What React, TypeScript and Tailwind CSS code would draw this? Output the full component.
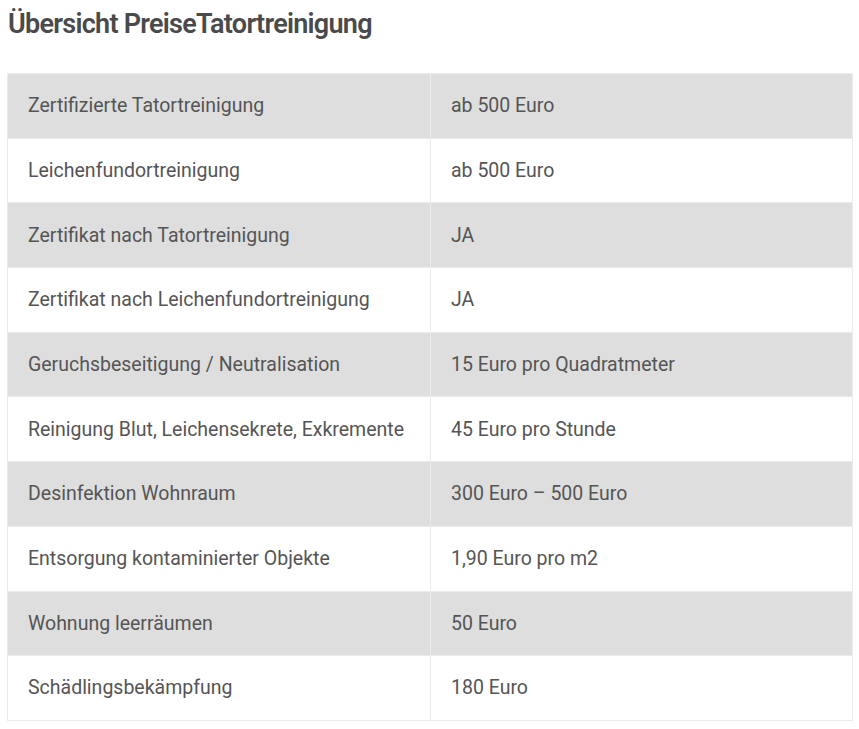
const rows: [string, string][] = [
  ['Zertifizierte Tatortreinigung', 'ab 500 Euro'],
  ['Leichenfundortreinigung', 'ab 500 Euro'],
  ['Zertifikat nach Tatortreinigung', 'JA'],
  ['Zertifikat nach Leichenfundortreinigung', 'JA'],
  ['Geruchsbeseitigung / Neutralisation', '15 Euro pro Quadratmeter'],
  ['Reinigung Blut, Leichensekrete, Exkremente', '45 Euro pro Stunde'],
  ['Desinfektion Wohnraum', '300 Euro – 500 Euro'],
  ['Entsorgung kontaminierter Objekte', '1,90 Euro pro m2'],
  ['Wohnung leerräumen', '50 Euro'],
  ['Schädlingsbekämpfung', '180 Euro'],
]

export default function App() {
  return (
    <div className="min-h-screen bg-white px-[7px] pt-[6px] font-['Roboto',sans-serif]">
      <h2 className="text-[27px] font-semibold leading-[36px] tracking-[-0.027em] text-[#4a4a4a] pl-[1px]">
        Übersicht PreiseTatortreinigung
      </h2>
      <table className="mt-[31px] w-[846px] border-collapse border border-[#ebebeb] text-[19.5px] text-[#555555]">
        <tbody>
          {rows.map(([label, price], i) => (
            <tr key={label} className={i % 2 === 0 ? 'bg-[#dedede]' : 'bg-white'}>
              <td className="h-[64.7px] w-[423px] border border-[#ebebeb] px-[20px] align-middle">{label}</td>
              <td className="h-[64.7px] border border-[#ebebeb] px-[20px] align-middle">{price}</td>
            </tr>
          ))}
        </tbody>
      </table>
    </div>
  )
}
